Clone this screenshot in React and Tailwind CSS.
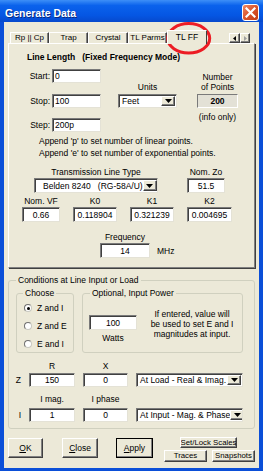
const sunken =
  'bg-white border border-t-[#7a7a7a] border-l-[#7a7a7a] border-r-[#e4e2d6] border-b-[#e4e2d6] shadow-[inset_1px_1px_0_#404040]';
const raised =
  'bg-[#ece9d8] border border-t-white border-l-white border-r-[#404040] border-b-[#404040] shadow-[inset_-1px_-1px_0_#808080]';

function TextBox({ className = '', value, left = false }) {
  return (
    <div
      className={`${sunken} ${className} flex items-center overflow-hidden whitespace-nowrap px-[2px] ${
        left ? 'justify-start' : 'justify-center'
      }`}
    >
      {value}
    </div>
  );
}

function DropArrow() {
  return (
    <div className={`${raised} flex h-full w-[14px] shrink-0 items-center justify-center`}>
      <svg width="7" height="4" viewBox="0 0 7 4">
        <path d="M0 0h7L3.5 4z" fill="#000" />
      </svg>
    </div>
  );
}

function Select({ className = '', value, pad = 'pl-[2px]' }) {
  return (
    <div className={`${sunken} ${className} flex items-stretch overflow-hidden p-px`}>
      <div className={`flex flex-1 items-center whitespace-pre ${pad}`}>{value}</div>
      <DropArrow />
    </div>
  );
}

function Radio({ checked, label, className = '' }) {
  return (
    <div className={`flex h-[10px] items-center ${className}`}>
      <div className="ml-[7px] flex h-[8px] w-[8px] items-center justify-center rounded-full border border-t-[#707070] border-l-[#707070] border-r-[#c8c8c0] border-b-[#c8c8c0] bg-white">
        {checked && <div className="h-[3px] w-[3px] rounded-full bg-black" />}
      </div>
      <span className="ml-[5px] whitespace-nowrap">{label}</span>
    </div>
  );
}

function Button({ className = '', children, isDefault = false }) {
  return (
    <div
      className={`${className} ${
        isDefault ? 'outline outline-1 outline-black -outline-offset-1' : ''
      } ${raised} flex items-center justify-center overflow-hidden whitespace-nowrap`}
    >
      {children}
    </div>
  );
}

function Tab({ className = '', children }) {
  return (
    <div
      className={`${className} flex h-[11px] items-center justify-center whitespace-nowrap border-l border-r border-t border-l-white border-r-[#404040] border-t-white shadow-[inset_-1px_0_0_#808080]`}
    >
      {children}
    </div>
  );
}

export default function App() {
  return (
    <div className="relative flex h-[471px] w-[263px] flex-col overflow-hidden bg-[#0b4fd8] font-['Liberation_Sans',Arial,sans-serif] text-[8.5px] leading-[10px] text-black">
      {/* title bar */}
      <div className="flex h-[22px] shrink-0 items-center justify-between bg-[linear-gradient(#3d8ff7,#0a62ec_25%,#0556e3_70%,#0749cc)] pl-[5px] pr-[4px]">
        <span className="mt-[3px] text-[10.5px] font-bold text-white [text-shadow:1px_1px_0_#0a2a80]">
          Generate Data
        </span>
        <div className="mt-[3px] flex h-[17px] w-[17px] items-center justify-center rounded-[3px] border border-white bg-[linear-gradient(135deg,#f08a66,#d9532b_50%,#c23d15)]">
          <svg width="11" height="11" viewBox="0 0 11 11">
            <path d="M1.5 1.5l8 8M9.5 1.5l-8 8" stroke="#fff" strokeWidth="2.2" strokeLinecap="square" />
          </svg>
        </div>
      </div>

      <div className="mx-[4px] mb-[3px] flex flex-1 flex-col bg-[#ece9d8]">
        {/* tabs */}
        <div className="mt-[8px] flex h-[13px] items-end pl-[6px] pr-[9px] text-[8px]">
          <Tab className="w-[39px]">Rp || Cp</Tab>
          <Tab className="w-[39px]">Trap</Tab>
          <Tab className="w-[40px]">Crystal</Tab>
          <Tab className="w-[39px]">TL Parms</Tab>
          <div className="relative z-10 -mb-px flex h-[14px] w-[40px] items-center justify-center border-l border-r border-t border-l-white border-r-[#404040] border-t-white bg-[#ece9d8] pb-[2px] text-[8.5px]">
            TL FF
          </div>
          <div className="flex-1" />
          <div className="flex h-[10px]">
            <div className={`${raised} flex w-[11px] items-center justify-center`}>
              <svg width="3" height="5" viewBox="0 0 3 5">
                <path d="M3 0v5L0 2.5z" fill="#000" />
              </svg>
            </div>
            <div className={`${raised} flex w-[10px] items-center justify-center`}>
              <svg width="3" height="5" viewBox="0 0 3 5">
                <path d="M0 0v5l3-2.5z" fill="#a0a0a0" />
              </svg>
            </div>
          </div>
        </div>

        {/* tab page */}
        <div className="mx-[4px] flex h-[225px] flex-col border border-b-[#808080] border-l-white border-r-[#808080] border-t-white shadow-[1px_1px_0_#404040]">
          <div className="ml-[18px] mt-[8px] whitespace-pre font-bold">Line Length   (Fixed Frequency Mode)</div>

          <div className="flex">
            <div className="flex flex-col pt-[7px]">
              <div className="flex items-center">
                <span className="w-[41px] text-right">Start:</span>
                <TextBox className="ml-[2px] h-[14px] w-[49px]" value="0" left />
              </div>
              <div className="mt-[11px] flex items-center">
                <span className="w-[41px] text-right">Stop:</span>
                <TextBox className="ml-[2px] h-[14px] w-[49px]" value="100" left />
              </div>
              <div className="mt-[10px] flex items-center">
                <span className="w-[41px] text-right">Step:</span>
                <TextBox className="ml-[2px] h-[14px] w-[49px]" value="200p" left />
              </div>
            </div>

            <div className="ml-[17px] flex w-[59px] flex-col pt-[20px]">
              <span className="text-center">Units</span>
              <Select className="mt-[2px] h-[14px]" value="Feet" />
            </div>

            <div className="ml-[20px] flex w-[41px] flex-col items-center pt-[10px]">
              <span className="whitespace-nowrap">Number</span>
              <span className="whitespace-nowrap">of Points</span>
              <div className="mt-[2px] flex h-[14px] w-full items-center justify-center border border-b-white border-l-[#7a7a7a] border-r-white border-t-[#7a7a7a] bg-[#e3e1d6] font-bold">
                200
              </div>
              <span className="mt-[4px] whitespace-nowrap">(info only)</span>
            </div>
          </div>

          <div className="ml-[30px] mt-[3px] leading-[12px]">
            <div>Append 'p' to set number of linear points.</div>
            <div>Append 'e' to set number of exponential points.</div>
          </div>

          <div className="mt-[8px] flex">
            <span className="ml-[25px] w-[124px] text-center">Transmission Line Type</span>
            <span className="ml-[29px] w-[38px] text-center">Nom. Zo</span>
          </div>
          <div className="mt-px flex">
            <Select className="ml-[25px] h-[15px] w-[124px]" value="Belden 8240   (RG-58A/U)" pad="pl-[7px]" />
            <TextBox className="ml-[29px] h-[15px] w-[38px]" value="51.5" />
          </div>

          <div className="mt-[3px] flex">
            <span className="ml-[13px] w-[38px] text-center">Nom. VF</span>
            <span className="ml-[13px] w-[44px] text-center">K0</span>
            <span className="ml-[13px] w-[44px] text-center">K1</span>
            <span className="ml-[13px] w-[45px] text-center">K2</span>
          </div>
          <div className="mt-px flex">
            <TextBox className="ml-[13px] h-[15px] w-[38px]" value="0.66" />
            <TextBox className="ml-[13px] h-[15px] w-[44px]" value="0.118904" />
            <TextBox className="ml-[13px] h-[15px] w-[44px]" value="0.321239" />
            <TextBox className="ml-[13px] h-[15px] w-[45px]" value="0.004695" />
          </div>

          <span className="ml-[91px] mt-[10px] w-[50px] text-center">Frequency</span>
          <div className="mt-px flex items-center">
            <TextBox className="ml-[91px] h-[15px] w-[50px]" value="14" />
            <span className="ml-[7px]">MHz</span>
          </div>
        </div>

        {/* conditions */}
        <fieldset className="mx-[4px] mt-[7px] rounded-[3px] border border-[#d0d0bf] pb-[6px]">
          <legend className="ml-[7px] px-[2px]">Conditions at Line Input or Load</legend>
          <div className="mt-[3px] flex">
            <fieldset className="ml-[7px] h-[65px] w-[58px] rounded-[3px] border border-[#d0d0bf]">
              <legend className="ml-[6px] px-[2px]">Choose</legend>
              <Radio className="mt-[5px]" checked label="Z and I" />
              <Radio className="mt-[8px]" label="Z and E" />
              <Radio className="mt-[8px]" label="E and I" />
            </fieldset>
            <fieldset className="ml-[8px] h-[65px] w-[161px] rounded-[3px] border border-[#d0d0bf]">
              <legend className="ml-[7px] px-[2px]">Optional, Input Power</legend>
              <div className="flex">
                <div className="ml-[6px] flex w-[48px] flex-col items-center pt-[17px]">
                  <TextBox className="h-[15px] w-[48px]" value="100" />
                  <span className="mt-[3px]">Watts</span>
                </div>
                <div className="ml-[8px] w-[94px] pt-[11px] text-center">
                  <div>If entered, value will</div>
                  <div>be used to set E and I</div>
                  <div>magnitudes at input.</div>
                </div>
              </div>
            </fieldset>
          </div>

          <div className="mt-[8px] flex">
            <span className="ml-[20px] w-[46px] text-center">R</span>
            <span className="ml-[8px] w-[45px] text-center">X</span>
          </div>
          <div className="mt-[2px] flex items-center">
            <span className="w-[20px] pr-[8px] text-right">Z</span>
            <TextBox className="h-[14px] w-[46px]" value="150" />
            <TextBox className="ml-[8px] h-[14px] w-[45px]" value="0" />
            <Select className="ml-[8px] h-[14px] w-[107px]" value="At Load - Real & Imag." />
          </div>

          <div className="mt-[7px] flex">
            <span className="ml-[20px] w-[46px] text-center">I mag.</span>
            <span className="ml-[8px] w-[45px] text-center">I phase</span>
          </div>
          <div className="mt-[4px] flex items-center">
            <span className="w-[20px] pr-[8px] text-right">I</span>
            <TextBox className="h-[14px] w-[46px]" value="1" />
            <TextBox className="ml-[8px] h-[14px] w-[45px]" value="0" />
            <Select className="ml-[8px] h-[14px] w-[107px]" value="At Input - Mag. & Phase" />
          </div>
        </fieldset>

        {/* buttons */}
        <div className="mt-[9px] flex items-start">
          <Button className="ml-[4px] h-[20px] w-[35px]">
            <span className="underline">O</span>K
          </Button>
          <Button className="ml-[19px] h-[20px] w-[36px]">
            <span className="underline">C</span>lose
          </Button>
          <Button className="ml-[18px] h-[20px] w-[37px]" isDefault>
            <span className="underline">A</span>pply
          </Button>
          <div className="-mt-px ml-[11px] flex w-[91px] flex-col items-end text-[7.8px]">
            <Button className="mr-[18px] h-[11px] w-[57px]">Set/Lock Scales</Button>
            <div className="mt-[2px] flex">
              <Button className="h-[12px] w-[43px]">Traces</Button>
              <Button className="ml-[5px] h-[12px] w-[43px]">Snapshots</Button>
            </div>
          </div>
        </div>
      </div>

      {/* red annotation circle */}
      <svg className="absolute left-[163px] top-[20px]" width="52" height="37" viewBox="0 0 52 37">
        <ellipse cx="25.7" cy="18.3" rx="21" ry="14.7" fill="none" stroke="#ec1c24" strokeWidth="3" />
      </svg>
    </div>
  );
}
